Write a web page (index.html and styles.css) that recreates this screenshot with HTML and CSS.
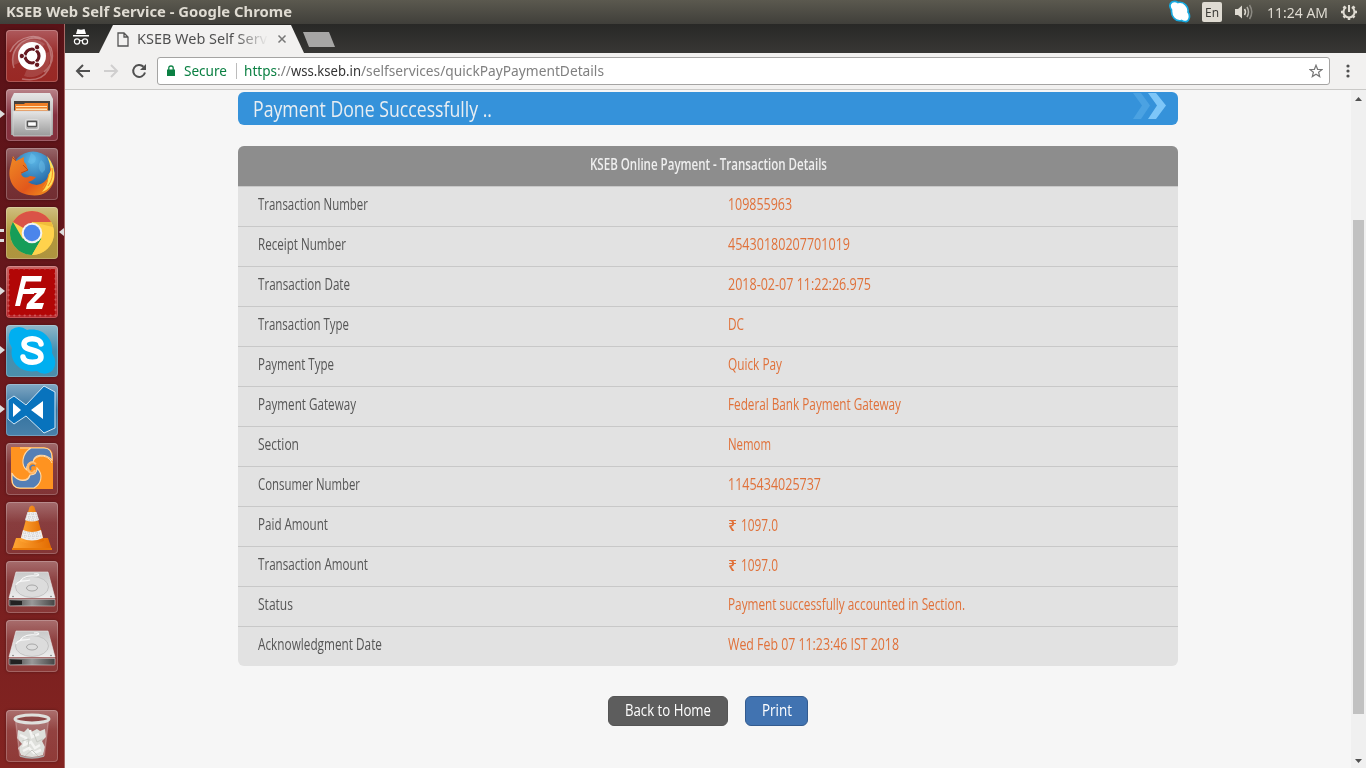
FILE: index.html
```html
<!DOCTYPE html>
<html lang="en">
<head>
<meta charset="utf-8">
<title>KSEB Web Self Service</title>
<link rel="stylesheet" href="styles.css">
</head>
<body>
<svg class="defs" width="0" height="0">
  <defs>
    <linearGradient id="steel" x1="0" y1="0" x2="0" y2="1"><stop offset="0" stop-color="#e6e6e6"/><stop offset="1" stop-color="#9a9a9a"/></linearGradient>
    <linearGradient id="disk" x1="0" y1="0" x2="0" y2="1"><stop offset="0" stop-color="#c9c9c9"/><stop offset="1" stop-color="#ececec"/></linearGradient>
    <linearGradient id="dark" x1="0" y1="0" x2="1" y2="0"><stop offset="0" stop-color="#333"/><stop offset=".5" stop-color="#999"/><stop offset="1" stop-color="#444"/></linearGradient>
    <linearGradient id="orange" x1="0" y1="0" x2="1" y2="0"><stop offset="0" stop-color="#ffa634"/><stop offset="1" stop-color="#e26a00"/></linearGradient>
    <linearGradient id="fox" x1="0" y1="0" x2="1" y2="1"><stop offset="0" stop-color="#f08a24"/><stop offset=".6" stop-color="#e2581c"/><stop offset="1" stop-color="#f59c1c"/></linearGradient>
    <radialGradient id="globe" cx=".5" cy=".2" r=".8"><stop offset="0" stop-color="#5cb8e8"/><stop offset="1" stop-color="#124a8c"/></radialGradient>
    <g id="drive">
      <path d="M10 11H42L49 37H3Z" fill="url(#disk)" stroke="#eee" stroke-width=".6"/>
      <ellipse cx="26" cy="26" rx="16.500" ry="10.500" fill="#dcdcdc" stroke="#b8b8b8" stroke-width=".7"/>
      <path d="M14 20C19 14 24 15 29 15C34 15 34 12 28 13M10 24C12 18 20 21 24 19" fill="none" stroke="#f8f8f8" stroke-width="1.200"/>
      <ellipse cx="26" cy="27" rx="5.500" ry="3" fill="#ddd" stroke="#999" stroke-width=".8"/>
      <circle cx="7" cy="35.500" r=".8" fill="#777"/><circle cx="45" cy="35.500" r=".8" fill="#777"/>
      <path d="M3 38.500H49V44Q49 45 48 45H4Q3 45 3 44Z" fill="url(#dark)" stroke="#ccc" stroke-width=".6"/>
      <path d="M5 40H16V44H5Z" fill="#222"/>
    </g>
  </defs>
</svg>

<header class="panel">
  <span class="panel-title fit" data-w="286">KSEB Web Self Service - Google Chrome</span>
  <div class="indicators">
    <svg width="22" height="24" viewBox="0 0 22 24"><path d="M3 2Q6 .5 9 2.500C15 1 20 7 19 12C22 16 20 22 16 21.500Q14 21.500 12.500 20.500C6 22 2 16 2.500 10Q-1 5 3 2Z" fill="#fff" stroke="#16a9e0" stroke-width="1.700"/></svg>
    <span class="lang"><span class="fit" data-w="14">En</span></span>
    <svg class="volume" width="22" height="20" viewBox="0 0 22 20"><path d="M1 7H4L8 3.500V16.500L4 13H1Z" fill="#dfdbd2"/><path d="M10.500 7Q12.500 10 10.500 13" fill="none" stroke="#dfdbd2" stroke-width="1.500"/><path d="M13 5Q16 10 13 15" fill="none" stroke="#b5b2aa" stroke-width="1.500"/><path d="M15.500 3Q20 10 15.500 17" fill="none" stroke="#8b8982" stroke-width="1.500"/></svg>
    <span class="clock fit" data-w="61">11:24 AM</span>
    <svg width="18" height="20" viewBox="0 0 18 20"><g fill="none" stroke="#dfdbd2"><path d="M6.200 5.200A5.500 5.500 0 1 0 11.800 5.200" stroke-width="2"/><path d="M9 3V10" stroke-width="2"/><path d="M3.500 4.500L5 6M1 10H3.500M3.500 15.500L5.200 13.800M9 15.500V18M14.500 15.500L12.800 13.800M14.500 10H17M14.500 4.500L13 6" stroke-width="2.500"/></g></svg>
  </div>
</header>

<div class="desktop">
  <nav class="launcher">
    <div class="tile dash"><svg viewBox="0 0 52 52"><g fill="none" stroke="#fff" stroke-opacity=".32" stroke-width="1.500"><path d="M8 38C2 20 18 4 35 9M16 49C43 54 51 31 41 13M4 22C12 5 35 0 45 18Q50 32 38 42"/></g><path d="M8 35C2 18 22 2 39 14L26 27ZM18 46C34 52 48 35 43 22L26 27Z" fill="#fff" opacity=".13"/><circle cx="26" cy="26" r="14" fill="#fff"/><circle cx="26" cy="26" r="7" fill="none" stroke="#651820" stroke-width="3.200"/><path d="M26 26L13 26M26 26L32.500 14.700M26 26L32.500 37.300" stroke="#fff" stroke-width="1.200"/><circle cx="26" cy="26" r="5" fill="#fff"/><g fill="#651820" stroke="#fff"><circle cx="15.800" cy="26" r="2.700"/><circle cx="31.100" cy="17.200" r="2.700"/><circle cx="31.100" cy="34.800" r="2.700"/></g></svg></div>
    <div class="tile files running"><svg viewBox="0 0 52 52"><path d="M8 4H44L47 10V46H5V10Z" fill="url(#steel)"/><path d="M8 12H44V23H8Z" fill="#46403c"/><path d="M9 15H18L19 14H42V23H9Z" fill="#ef7e26"/><path d="M10 17H41V18H10ZM10 19.500H41V21H10Z" fill="#ffe3b5"/><path d="M7 22H45V46Q45 47 44 47H8Q7 47 7 46Z" fill="url(#steel)" stroke="#d6d6d6" stroke-width=".8"/><rect x="19.500" y="30.500" width="13" height="10" rx="2" fill="#b4b4b4" stroke="#dcdcdc" stroke-width="1.200"/><rect x="21.500" y="32.500" width="9" height="5" rx=".5" fill="#fff" stroke="#555" stroke-width="1.300"/></svg></div>
    <div class="tile plain"><svg viewBox="0 0 52 52"><circle cx="27" cy="25" r="21.500" fill="url(#globe)"/><path d="M25 5Q32 8 29 14Q25 18 22 14ZM35 12Q40 15 39 22L36 25Q32 22 33 16Z" fill="#74c5ed" opacity=".4"/><path d="M7 8L10 13L18 9Q17 14 20 16L22 22L15 26Q18 32 24 28L30 29Q27 33 22 34Q31 40 38 34Q45 28 44 20L46 17Q50 25 48 33C44 45 35 49 23 47C10 45 1 34 4 20Z" fill="url(#fox)"/><path d="M6 9L10 13M17 17L22 22L15 25" stroke="#ba4b17" fill="none"/><path d="M41 8Q50 18 48 31Q45 41 36 44Q43 36 42 28L45 22Q44 15 41 8Z" fill="#ffdf57"/><path d="M46 20Q48 30 42 38M43 26Q42 34 37 40" stroke="#f48b22" fill="none"/></svg></div>
    <div class="tile chrome windows active"><svg viewBox="0 0 52 52"><circle cx="26" cy="26" r="22" fill="#ffd24c"/><path d="M26 26L6.950 15A22 22 0 0 1 45.050 15H26Z" fill="#da5347"/><path d="M6.950 15A22 22 0 0 0 26 48L35.500 31.500L16.500 31.500Z" fill="#169d58"/><path d="M26 48L35.500 31.500L37 23L45 15A22 22 0 0 1 26 48Z" fill="#ffd24c"/><path d="M26 15H45A22 22 0 0 1 47 20Z" fill="#f0bc3b"/><circle cx="26" cy="26" r="10.300" fill="#f3f3f3"/><circle cx="26" cy="26" r="8.300" fill="#4b85eb"/></svg></div>
    <div class="tile filezilla running"><svg viewBox="0 0 52 52"><rect x="3" y="3" width="46" height="46" fill="#b20606"/><rect x="2.500" y="2.500" width="47" height="47" fill="none" stroke="#cf5858" stroke-width="2.200" stroke-linecap="round" stroke-dasharray=".1 5.100"/><path d="M16 10H36L35 15.500H20L18 23H29L28 28H17L14 40H9Z" fill="#fff"/><path d="M24 22H40L38 27L28 37H38L36 43H20L21 38L31 27H23Z" fill="#fff"/></svg></div>
    <div class="tile skype running"><svg viewBox="0 0 52 52"><path d="M5 5Q13 -1 21 5C36 2 48 13 46 28Q52 37 47 45Q39 52 31 46C15 49 3 37 6 23Q0 13 5 5Z" fill="#00aff0"/><path d="M35 19C34 12 18 12 18 19C18 27 35 23 35 32C35 39 18 39 17 32" fill="none" stroke="#fff" stroke-width="5.500" stroke-linecap="round"/></svg></div>
    <div class="tile code running"><svg viewBox="0 0 52 52"><path d="M38 2L49 8V44L38 49L20 32L8 40L2 35V16L8 12L20 21Z" fill="#0873bd" stroke="#d0e7f7"/><path d="M7 19L15 26L7 33ZM25 26L37 17V35Z" fill="#fff"/></svg></div>
    <div class="tile swirl"><svg viewBox="0 0 52 52"><path d="M5 4H38Q47 5 47 14V46H14Q5 45 5 36Z" fill="#ff9320"/><g fill="#557fb6" stroke="#ffd9a8" stroke-width="1.100"><path d="M14 5H38Q46 5 46 15V17C38 9 28 12 27 19C23 19 20 22 21 27C15 23 15 11 25 5Z"/><path d="M6 31V36Q6 45 14 45H28C35 41 38 32 31 25C31 30 28 32 24 32C22 40 12 39 6 31Z"/></g><path d="M46 20C42 11 30 11 27 19M6 30C11 39 21 39 24 32" fill="none" stroke="#ffd9a8"/><path d="M30 21C25 17 21 21 22 26C23 31 28 31 29 27" fill="none" stroke="#ffbd73" stroke-width="2"/><path d="M29 23C26 21 23 24 25 27" fill="none" stroke="#557fb6" stroke-width="1.500"/></svg></div>
    <div class="tile"><svg viewBox="0 0 52 52"><path d="M10 36H42L46 48H6Z" fill="url(#orange)"/><path d="M23.500 5Q26 2 28.500 5L38 39Q26 45 14 39Z" fill="url(#orange)"/><path d="M21.500 10H30.500L33 18Q26 21 19 18ZM17 28Q26 32 35 28L37 36Q26 41 15 36Z" fill="#eee"/><path d="M21 12H31M20 15H32M19 18H33M17 31H35M16 34H36M23 10V19M27 10V19M31 12V19M19 29V37M23 30V38M27 30V38M31 30V38" stroke="#bbb" stroke-width=".6" stroke-dasharray="1 1"/><path d="M6 46H46V48H6Z" fill="#e87808"/></svg></div>
    <div class="tile"><svg viewBox="0 0 52 52"><use href="#drive"/></svg></div>
    <div class="tile"><svg viewBox="0 0 52 52"><use href="#drive"/></svg></div>
    <div class="tile trash"><svg viewBox="0 0 52 52"><path d="M9 12H43L39 46Q26 50 13 46Z" fill="#ddd" opacity=".25"/><path d="M12 20L18 22L22 18L25 22L31 19L34 21L39 19L40 27L36 31L39 37L37 45Q26 49 15 45L12 38L16 34L11 28Z" fill="#dedfdb"/><path d="M14 25L20 28L18 35L25 32L29 38L34 35M24 20L26 27L33 24M17 41L23 38L28 43L35 40" fill="none" stroke="#f4f4f2" stroke-width="2.500"/><path d="M16 31L23 29L22 37M28 24L31 32L37 29M19 46L26 40L32 46" fill="none" stroke="#c8cac4"/><path d="M10 12L14 46M42 12L38 46" stroke="#c99" opacity=".6"/><ellipse cx="26" cy="9" rx="17" ry="4" fill="#8c4545" stroke="#dfe0dd" stroke-width="3"/><path d="M14 46Q26 50 38 46" fill="none" stroke="#aaa" stroke-width="1.500"/></svg></div>
  </nav>

  <main class="browser">
    <div class="tabstrip">
      <svg class="incognito" width="18" height="18" viewBox="0 0 18 18"><path d="M5.500 1Q9 2.500 12.500 1L14 6H4ZM1 7H17V8.500H1Z" fill="#fff"/><g fill="none" stroke="#fff" stroke-width="1.200"><circle cx="5" cy="13.500" r="2.600"/><circle cx="13" cy="13.500" r="2.600"/><path d="M7.600 13Q9 12 10.400 13"/></g></svg>
      <div class="tab">
        <svg width="12" height="15" viewBox="0 0 12 15"><path d="M1 1H7L11 5V14H1ZM7 1V5H11" fill="none" stroke="#555" stroke-width="1.300"/></svg>
        <div class="tab-title"><span class="fit" data-w="130">KSEB Web Self Serv</span></div>
        <svg class="close" width="10" height="10" viewBox="0 0 10 10"><path d="M1.500 1.500L8.500 8.500M8.500 1.500L1.500 8.500" stroke="#777" stroke-width="1.500"/></svg>
      </div>
      <div class="newtab"></div>
    </div>
    <div class="toolbar">
      <svg width="16" height="16" viewBox="0 0 16 16"><path d="M15 8H2M8 2L2 8L8 14" fill="none" stroke="#505050" stroke-width="2"/></svg>
      <svg width="16" height="16" viewBox="0 0 16 16"><path d="M1 8H14M8 2L14 8L8 14" fill="none" stroke="#d0cfcf" stroke-width="2"/></svg>
      <svg width="16" height="16" viewBox="0 0 16 16"><path d="M14 9.500A6 6 0 1 1 12.500 3.800" fill="none" stroke="#505050" stroke-width="2"/><path d="M15 1V7H9Z" fill="#505050"/></svg>
      <div class="omnibox">
        <svg class="lock" width="8" height="12" viewBox="0 0 8 12"><path d="M0 4.500H8V11H0Z" fill="#0b8043"/><path d="M1.800 5V3Q1.800 1 4 1Q6.200 1 6.200 3V5" fill="none" stroke="#0b8043" stroke-width="1.300"/></svg>
        <span class="secure fit" data-w="43">Secure</span>
        <i class="divider"></i>
        <span class="url"><span class="scheme fit" data-w="33">https</span><span class="path fit" data-w="14">://</span><span class="host fit" data-w="70">wss.kseb.in</span><span class="path fit" data-w="243">/selfservices/quickPayPaymentDetails</span></span>
        <svg class="star" width="14" height="14" viewBox="0 0 14 14"><path d="M7 1.200L8.600 5.300L13 5.500L9.600 8.200L10.700 12.600L7 10.200L3.300 12.600L4.400 8.200L1 5.500L5.400 5.300Z" fill="none" stroke="#777" stroke-width="1.200"/></svg>
      </div>
      <svg class="menu" width="4" height="14" viewBox="0 0 4 14"><g fill="#505050"><circle cx="2" cy="2" r="1.600"/><circle cx="2" cy="7" r="1.600"/><circle cx="2" cy="12" r="1.600"/></g></svg>
    </div>

    <div class="viewport">
      <section class="page">
        <div class="banner">
          <h1 class="fit" data-w="239">Payment Done Successfully ..</h1>
          <svg width="34" height="27" viewBox="0 0 34 27"><path d="M0 1H8L17 13.500L8 27H0L9 13.500Z" fill="#4ba2e2"/><path d="M15 1H23L33 13.500L23 27H15L24 13.500Z" fill="#7dc6f8"/></svg>
        </div>
        <div class="details">
          <h2><span class="fit" data-w="237">KSEB Online Payment - Transaction Details</span></h2>
          <dl>
            <div><dt><span class="fit" data-w="110">Transaction Number</span></dt><dd><span class="fit" data-w="64">109855963</span></dd></div>
            <div><dt><span class="fit" data-w="88">Receipt Number</span></dt><dd><span class="fit" data-w="122">45430180207701019</span></dd></div>
            <div><dt><span class="fit" data-w="92">Transaction Date</span></dt><dd><span class="fit" data-w="143">2018-02-07 11:22:26.975</span></dd></div>
            <div><dt><span class="fit" data-w="91">Transaction Type</span></dt><dd><span class="fit" data-w="16">DC</span></dd></div>
            <div><dt><span class="fit" data-w="76">Payment Type</span></dt><dd><span class="fit" data-w="54">Quick Pay</span></dd></div>
            <div><dt><span class="fit" data-w="98">Payment Gateway</span></dt><dd><span class="fit" data-w="173">Federal Bank Payment Gateway</span></dd></div>
            <div><dt><span class="fit" data-w="41">Section</span></dt><dd><span class="fit" data-w="43">Nemom</span></dd></div>
            <div><dt><span class="fit" data-w="102">Consumer Number</span></dt><dd><span class="fit" data-w="93">1145434025737</span></dd></div>
            <div><dt><span class="fit" data-w="70">Paid Amount</span></dt><dd class="money"><span class="rupee fit" data-w="9">₹</span><span class="fit" data-w="37">1097.0</span></dd></div>
            <div><dt><span class="fit" data-w="110">Transaction Amount</span></dt><dd class="money"><span class="rupee fit" data-w="9">₹</span><span class="fit" data-w="37">1097.0</span></dd></div>
            <div><dt><span class="fit" data-w="35">Status</span></dt><dd><span class="fit" data-w="237">Payment successfully accounted in Section.</span></dd></div>
            <div><dt><span class="fit" data-w="124">Acknowledgment Date</span></dt><dd><span class="fit" data-w="171">Wed Feb 07 11:23:46 IST 2018</span></dd></div>
          </dl>
        </div>
        <div class="actions">
          <button class="home"><span class="fit" data-w="86">Back to Home</span></button>
          <button class="print"><span class="fit" data-w="30">Print</span></button>
        </div>
      </section>
      <div class="scrollbar">
        <svg width="7" height="4" viewBox="0 0 7 4"><path d="M0 4L3.500 0L7 4Z" fill="#505050"/></svg>
        <div class="track"><div class="thumb"></div></div>
        <svg width="7" height="4" viewBox="0 0 7 4"><path d="M0 0L3.500 4L7 0Z" fill="#505050"/></svg>
      </div>
    </div>
  </main>
</div>
<script src="fit.js"></script>
</body>
</html>
```

FILE: styles.css
```css
* { box-sizing: border-box; }
body { margin: 0; width: 1366px; height: 768px; overflow: hidden; display: flex; flex-direction: column; font-family: "Noto Sans", "Open Sans", sans-serif; background: #f6f6f6; }
svg { display: block; flex: none; }
.defs { position: absolute; }
.fit { display: inline-block; white-space: nowrap; transform-origin: 0 50%; }

.panel { height: 24px; flex: none; display: flex; justify-content: space-between; align-items: center; padding: 0 8px 0 6px; background: linear-gradient(#5b594f, #403f3a); color: #dfdbd2; }
.panel-title { font-size: 14px; font-weight: 700; line-height: 22px; }
.indicators { display: flex; align-items: center; }
.lang { width: 20px; height: 20px; margin-left: 11px; padding-left: 3px; border-radius: 2px; background: #dfdbd2; color: #3c3b37; font-size: 12px; line-height: 21px; }
.volume { margin-left: 12px; }
.clock { margin: 0 12px 0 11px; font-size: 14.5px; line-height: 22px; }

.desktop { flex: 1; display: flex; min-height: 0; }
.launcher { width: 65px; flex: none; display: flex; flex-direction: column; gap: 7px; padding: 6px 0 6px 6px; background: linear-gradient(#591217, #6b191d 45%, #832421); border-right: 1px solid #a86a67; }
.tile { position: relative; width: 52px; height: 52px; flex: none; border-radius: 4px; background: linear-gradient(rgba(255,255,255,.35), rgba(255,255,255,.14) 40%, rgba(255,255,255,.1)); box-shadow: inset 0 0 0 1px rgba(255,255,255,.22), 0 0 3px rgba(0,0,0,.35); }
.tile svg { width: 52px; height: 52px; }
.dash { background: linear-gradient(#ae5a5d, #9a2d2b 45%, #992824); }
.files { background: linear-gradient(#b98389, #853140 50%, #84313d); }
.chrome { background: linear-gradient(#d0bf80, #b2983c 50%, #ae943f); }
.filezilla { background: linear-gradient(#c76767, #b33b3b 50%, #b52227); }
.skype { background: linear-gradient(#91b7c8, #4290b2 50%, #4c8eaa); }
.code { background: linear-gradient(#81a8c3, #34729f 50%, #4981aa); }
.trash { margin-top: auto; }
.running::before { content: ""; position: absolute; left: -6px; top: 21px; border: 4px solid transparent; border-left: 5px solid #ddd; border-right: 0; }
.windows::before { content: ""; position: absolute; left: -6px; top: 22px; width: 4px; height: 7px; border: solid #ddd; border-width: 3px 0; }
.active::after { content: ""; position: absolute; right: -6px; top: 21px; border: 4px solid transparent; border-right: 5px solid #ddd; border-left: 0; }

.browser { flex: 1; min-width: 0; display: flex; flex-direction: column; }
.tabstrip { height: 29px; flex: none; display: flex; background: linear-gradient(#282826, #383735); }
.incognito { margin: 4px 0 0 7px; }
.tab { width: 206px; height: 28px; margin: 1px 0 0 9px; padding: 0 18px 0 18px; display: flex; align-items: center; background: #f2f1f0; clip-path: polygon(14px 0, 192px 0, 205px 28px, 0 28px); }
.tab-title { width: 131px; margin-left: 8px; overflow: hidden; font-size: 14px; line-height: 26px; color: #505050; -webkit-mask-image: linear-gradient(to right, #000 98px, transparent 131px); mask-image: linear-gradient(to right, #000 98px, transparent 131px); }
.close { margin-left: 9px; }
.newtab { width: 32px; height: 15px; margin: 8px 0 0 -2px; background: #a7a6a5; clip-path: polygon(0 0, 26px 0, 32px 15px, 6px 15px); }
.toolbar { height: 37px; flex: none; display: flex; align-items: center; gap: 12px; padding: 0 16px 0 10px; background: #f2f1f0; border-bottom: 1px solid #cac9c7; }
.omnibox { flex: 1; height: 28px; margin-left: -2px; display: flex; align-items: center; padding: 0 6px 0 9px; border: 1px solid #a5a4a3; border-radius: 3px; background: #fff; font-size: 14px; line-height: 26px; }
.secure { margin-left: 9px; color: #0b8043; }
.divider { width: 1px; height: 16px; margin: 0 7px 0 9px; background: #bcbcbc; }
.url { display: flex; }
.scheme { color: #0b8043; }
.host { color: #333; }
.path { color: #808080; }
.star { margin-left: auto; }
.menu { margin-left: 4px; }

.viewport { flex: 1; min-height: 0; display: flex; justify-content: space-between; background: #f6f6f6; }
.page { width: 940px; margin-left: 173px; padding-top: 2px; font-family: "Open Sans", "Noto Sans", sans-serif; }
.banner { height: 33px; display: flex; justify-content: space-between; padding: 0 11px 0 15px; border-radius: 6px; background: #3592da; color: #e9eef2; }
.banner h1 { margin: 0; font-size: 22px; font-weight: 400; line-height: 32px; }
.details { margin-top: 21px; border-radius: 6px; overflow: hidden; background: #e2e2e2; }
.details h2 { height: 40px; margin: 0; background: #8d8d8d; color: #eee; font-size: 15.5px; font-weight: 600; line-height: 36px; text-align: center; }
dl { margin: 0; }
dl div { display: flex; height: 40px; border-top: 1px solid #c8c8c8; font-size: 15.5px; line-height: 35px; }
dt, dd { width: 50%; margin: 0; padding-left: 20px; }
dt { color: #555; }
dd { color: #e0713a; }
.money { display: flex; gap: 4px; line-height: 37px; }
.rupee { font-weight: 600; }
.actions { display: flex; justify-content: center; gap: 17px; margin-top: 30px; }
button { height: 30px; padding: 0 0 0 16px; border: 1px solid #555; border-radius: 6px; color: #fff; background: #5d5d5d; font: 16.5px/24px "Open Sans", sans-serif; text-align: left; }
button .fit { display: block; width: max-content; margin-top: -2px; }
.home { width: 120px; }
.print { width: 63px; border-color: #335b8f; background: #4173b1; }
.scrollbar { width: 15px; display: flex; flex-direction: column; align-items: center; padding: 7px 0 5px; background: #f0f0f0; }
.track { flex: 1; width: 11px; padding-top: 119px; }
.thumb { height: 494px; background: #c1c1c1; }
```

FILE: fit.js
```js
document.querySelectorAll('.fit').forEach(function (el) {
  var natural = el.getBoundingClientRect().width;
  var target = Number(el.dataset.w);
  el.style.transform = 'scaleX(' + target / natural + ')';
  el.style.marginRight = parseFloat(getComputedStyle(el).marginRight) + target - natural + 'px';
});
```
